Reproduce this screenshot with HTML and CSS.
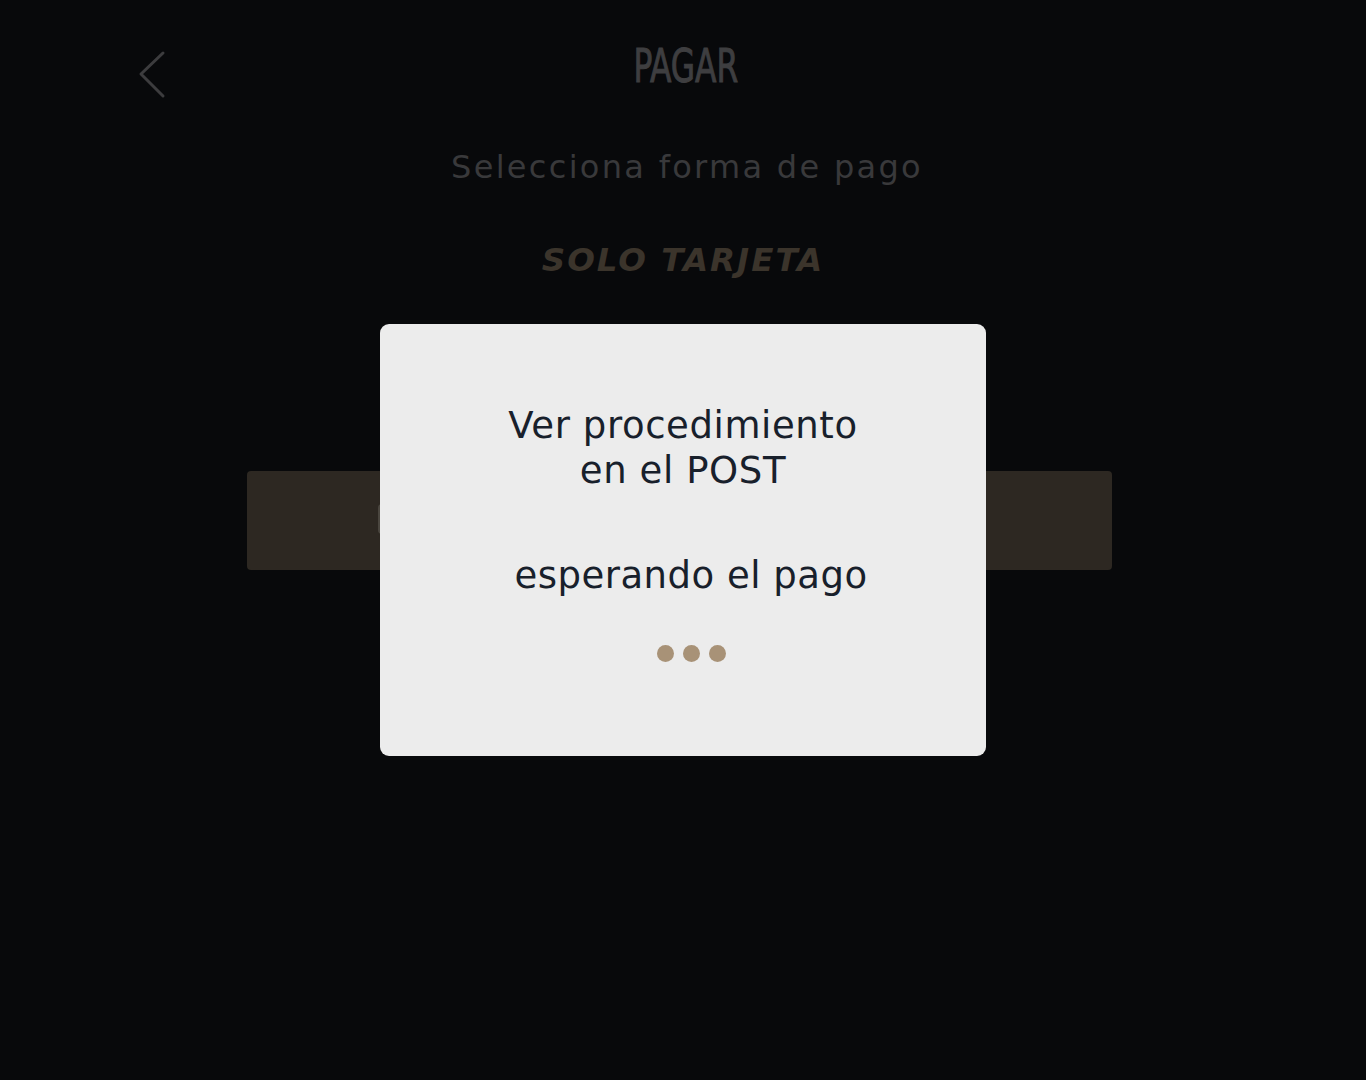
FILE: index.html
```html
<!DOCTYPE html>
<html lang="es">
<head>
<meta charset="utf-8">
<title>Pagar</title>
<link rel="stylesheet" href="styles.css">
</head>
<body>
<div class="page">
  <header class="header">
    <a class="back" href="#" aria-label="Volver">
      <svg width="30" height="50" viewBox="0 0 30 50"><path d="M26 3 L4 24 L26 46" fill="none" stroke="#3c3c3e" stroke-width="3" stroke-linecap="round" stroke-linejoin="round"/></svg>
    </a>
    <h1 class="title">PAGAR</h1>
  </header>
  <p class="subtitle">Selecciona forma de pago</p>
  <p class="only">SOLO TARJETA</p>
  <div class="card-btn"><span class="card-inner"></span></div>
</div>
<div class="overlay">
  <div class="modal">
    <p class="modal-title">Ver procedimiento<br>en el POST</p>
    <p class="modal-wait">esperando el pago</p>
    <div class="dots"><span></span><span></span><span></span></div>
  </div>
</div>
</body>
</html>
```
FILE: styles.css
```css
html, body {
  margin: 0;
  padding: 0;
  background: #08090b;
  height: 100%;
}
body {
  font-family: "DejaVu Sans", "Noto Sans", sans-serif;
}
.page {
  width: 1366px;
  min-height: 1080px;
  display: flex;
  flex-direction: column;
  align-items: center;
}
.header {
  width: 100%;
  height: 130px;
  position: relative;
  display: flex;
  justify-content: center;
}
.back {
  position: absolute;
  left: 137px;
  top: 50px;
  display: block;
}
.title {
  margin: 38px 0 0 5px;
  font-family: "DejaVu Sans", sans-serif;
  font-stretch: condensed;
  font-weight: normal;
  font-size: 47px;
  color: #3e3e40;
  -webkit-text-stroke: 1px #3e3e40;
  letter-spacing: 0;
  transform: scaleX(0.74);
  line-height: 56px;
}
.subtitle {
  margin: 17px 0 0 8px;
  font-size: 32px;
  letter-spacing: 2.3px;
  color: #39393b;
  line-height: 40px;
}
.only {
  margin: 53px 0 0;
  font-size: 32.5px;
  font-weight: bold;
  font-style: italic;
  letter-spacing: 2px;
  color: #3b342b;
  line-height: 40px;
}
.card-btn {
  margin: 191px 8px 0 0;
  width: 865px;
  height: 99px;
  background: #2d2822;
  border-radius: 4px;
  position: relative;
}
.card-inner {
  position: absolute;
  left: 131px;
  top: 33px;
  width: 8px;
  height: 30px;
  background: #4a463f;
  border-radius: 4px;
}
.overlay {
  position: fixed;
  inset: 0;
  display: flex;
  justify-content: center;
  align-items: flex-start;
}
.modal {
  margin-top: 324px;
  width: 606px;
  height: 432px;
  background: #ececec;
  border-radius: 9px;
  box-sizing: border-box;
  padding-top: 79px;
  display: flex;
  flex-direction: column;
  align-items: center;
  color: #18202b;
}
.modal-title {
  margin: 0;
  text-align: center;
  font-size: 37px;
  line-height: 45px;
  letter-spacing: 0.6px;
}
.modal-wait {
  margin: 60px 0 0 16px;
  font-size: 37px;
  line-height: 45px;
  letter-spacing: 0.5px;
}
.dots {
  margin: 47px 0 0 16px;
  display: flex;
  gap: 9px;
}
.dots span {
  width: 17px;
  height: 17px;
  border-radius: 50%;
  background: #a89277;
}
```
